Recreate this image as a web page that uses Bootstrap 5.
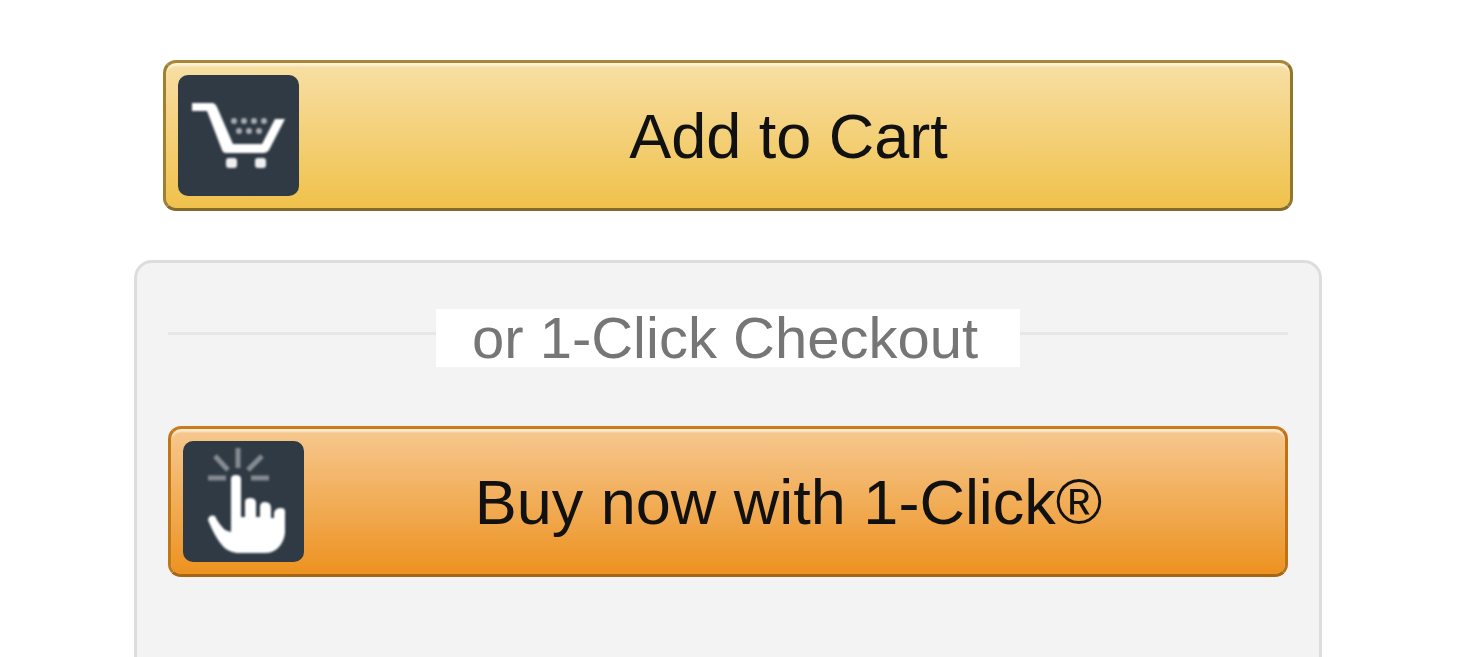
<!DOCTYPE html>
<html lang="en">
<head>
<meta charset="utf-8">
<meta name="viewport" content="width=device-width, initial-scale=1">
<title>Add to Cart</title>
<link href="https://cdn.jsdelivr.net/npm/bootstrap@5.3.0/dist/css/bootstrap.min.css" rel="stylesheet">
<style>
  body { font-family: "Liberation Sans", Arial, sans-serif; background: #fff; }
  .buy-box { padding: 60px 138px 0 134px; }
  .cart-row { padding: 0 29px; margin-bottom: 49px; }
  .btn-buy {
    --bs-btn-color: #111;
    --bs-btn-padding-x: 12px;
    --bs-btn-padding-y: 12px;
    --bs-btn-border-width: 3px;
    --bs-btn-border-radius: 13px;
    --bs-btn-font-size: 63px;
    --bs-btn-line-height: 72px;
    box-shadow: inset 0 4px 2px -1px rgba(255, 255, 255, .6);
  }
  .btn-cart {
    background: linear-gradient(#f7dfa5, #f0c14b) padding-box;
    border-color: #a88734 #94762b #846a29 #a07f2f;
  }
  .btn-oneclick {
    background: linear-gradient(#f6c88f, #ed9220) padding-box;
    border-color: #ca7c1b #be7215 #a86512 #c27717;
  }
  .btn-icon { width: 121px; height: 121px; }
  .checkout-panel {
    background: #f3f3f3;
    border: 3px solid #ddd;
    border-bottom: 0;
    border-radius: 18px 18px 0 0;
    padding: 46px 31px 32px;
  }
  .divider { margin-bottom: 59px; }
  .divider-line { height: 3px; background: #e7e7e7; margin-bottom: 10px; }
  .divider-label { font-size: 58px; line-height: 58px; padding: 0 42px 0 36px; color: #767676; }
</style>
</head>
<body>
<main class="buy-box d-flex flex-column min-vh-100">
  <div class="cart-row">
    <button type="button" class="btn btn-buy btn-cart w-100 d-flex align-items-center">
      <svg class="btn-icon flex-shrink-0" viewBox="0 0 121 121" aria-hidden="true">
        <defs><filter id="soft"><feGaussianBlur stdDeviation="0.8"/></filter></defs>
        <rect width="121" height="121" rx="10" fill="#303a44"/>
        <g filter="url(#soft)">
          <path d="M14 28H35Q38 29 39 32L55 69H84L97 44H107L91 75Q89 78 86 78H48Q45 78 44 75L29 36H14Z" fill="#fff"/>
          <g fill="#eee"><rect x="48" y="83" width="11" height="10" rx="3"/><rect x="77" y="83" width="11" height="10" rx="3"/></g>
          <g fill="#a9adb1"><circle cx="56" cy="46" r="3"/><circle cx="66" cy="46" r="3"/><circle cx="76" cy="46" r="3"/><circle cx="86" cy="46" r="3"/><circle cx="61" cy="56" r="3"/><circle cx="71" cy="56" r="3"/><circle cx="81" cy="56" r="3"/></g>
        </g>
      </svg>
      <span class="flex-grow-1 text-center">Add to Cart</span>
    </button>
  </div>

  <section class="checkout-panel flex-grow-1">
    <div class="divider d-flex align-items-center">
      <div class="divider-line flex-fill"></div>
      <span class="divider-label bg-white text-nowrap">or 1-Click Checkout</span>
      <div class="divider-line flex-fill"></div>
    </div>
    <button type="button" class="btn btn-buy btn-oneclick w-100 d-flex align-items-center">
      <svg class="btn-icon flex-shrink-0" viewBox="0 0 121 121" aria-hidden="true">
        <rect width="121" height="121" rx="10" fill="#303a44"/>
        <g filter="url(#soft)">
          <path d="M55 7V27M32 15L45 29M79 15L65 29M25 37H43M68 37H86" fill="none" stroke="#858b91" stroke-width="5"/>
          <path d="M48 38Q48 34 53 34Q58 34 58 38V76H62V61Q62 57 67 57Q73 57 73 62V76H77V66Q77 61 82 61Q88 61 88 67V77H91V72Q92 67 98 67Q103 67 102 73V92Q101 101 95 107Q90 112 82 112H54Q44 111 38 103Q31 94 25 79Q26 73 32 75Q35 82 42 89L48 91Z" fill="#fff"/>
        </g>
      </svg>
      <span class="flex-grow-1 text-center">Buy now with 1-Click®</span>
    </button>
  </section>
</main>
<script src="https://cdn.jsdelivr.net/npm/bootstrap@5.3.0/dist/js/bootstrap.bundle.min.js"></script>
</body>
</html>
